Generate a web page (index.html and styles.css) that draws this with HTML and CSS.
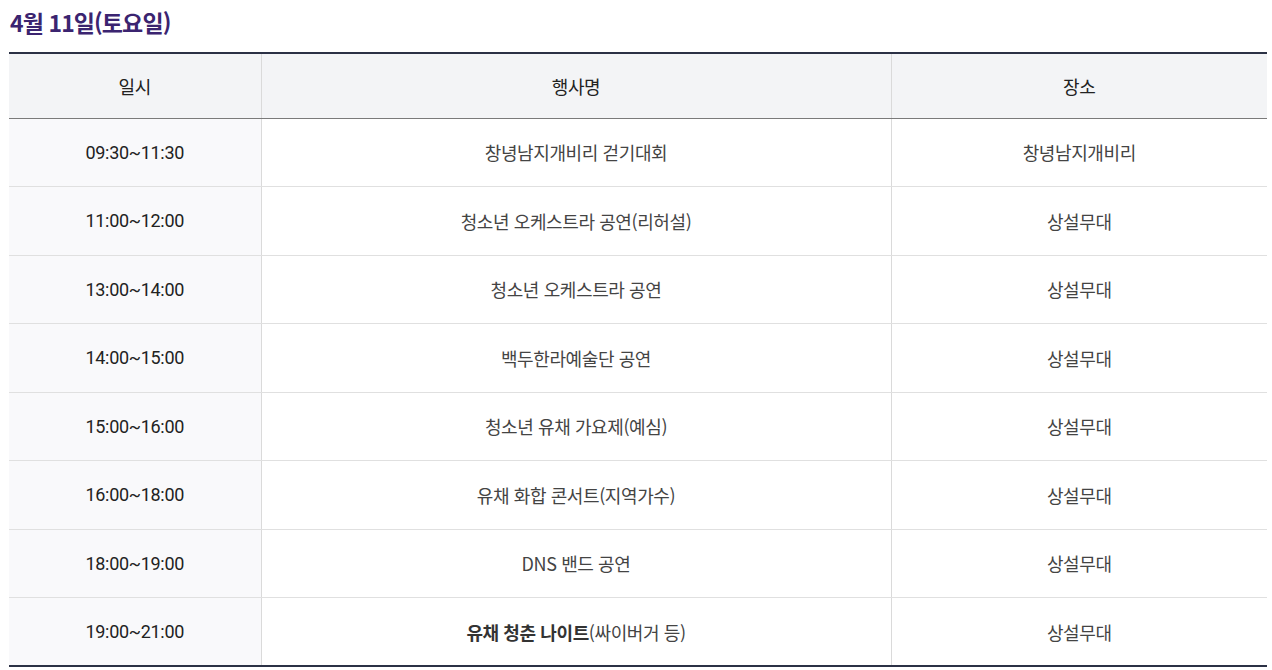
FILE: index.html
```html
<!DOCTYPE html>
<html lang="ko">
<head>
<meta charset="utf-8">
<link rel="stylesheet" href="styles.css">
</head>
<body>
<div class="wrap">
  <h2 class="title">4월 11일(토요일)</h2>
  <table class="sched">
    <colgroup>
      <col class="c1"><col class="c2"><col class="c3">
    </colgroup>
    <thead>
      <tr><th>일시</th><th>행사명</th><th>장소</th></tr>
    </thead>
    <tbody>
      <tr><td class="time">09:30~11:30</td><td>창녕남지개비리 걷기대회</td><td>창녕남지개비리</td></tr>
      <tr><td class="time">11:00~12:00</td><td>청소년 오케스트라 공연(리허설)</td><td>상설무대</td></tr>
      <tr><td class="time">13:00~14:00</td><td>청소년 오케스트라 공연</td><td>상설무대</td></tr>
      <tr><td class="time">14:00~15:00</td><td>백두한라예술단 공연</td><td>상설무대</td></tr>
      <tr><td class="time">15:00~16:00</td><td>청소년 유채 가요제(예심)</td><td>상설무대</td></tr>
      <tr><td class="time">16:00~18:00</td><td>유채 화합 콘서트(지역가수)</td><td>상설무대</td></tr>
      <tr><td class="time">18:00~19:00</td><td>DNS 밴드 공연</td><td>상설무대</td></tr>
      <tr><td class="time">19:00~21:00</td><td><strong>유채 청춘 나이트</strong>(싸이버거 등)</td><td>상설무대</td></tr>
    </tbody>
  </table>
</div>
</body>
</html>
```
FILE: styles.css
```css
* { box-sizing: border-box; }
html, body { margin: 0; padding: 0; background: #fff; }
body {
  font-family: "Noto Sans CJK KR", "Noto Sans", sans-serif;
  color: #333;
}
.wrap {
  padding: 6px 5px 0 9px;
}
.title {
  margin: 0 0 14px 1px;
  font-size: 23px;
  line-height: 32px;
  font-weight: 700;
  color: #3b2470;
  letter-spacing: -0.9px;
}
.sched {
  width: 1258px;
  border-collapse: collapse;
  border-top: 2px solid #2b3145;
  border-bottom: 2px solid #2b3145;
  table-layout: fixed;
}
.c1 { width: 252px; }
.c2 { width: 630px; }
.c3 { width: 376px; }
.sched th {
  height: 65px;
  background: #f3f4f6;
  font-weight: 400;
  font-size: 18px;
  color: #222;
  border-left: 1px solid #dadada;
  border-bottom: 1px solid #7a7a7a;
  letter-spacing: -0.4px;
}
.sched td {
  height: 68.5px;
  text-align: center;
  font-size: 18px;
  color: #444;
  border-left: 1px solid #dadada;
  border-bottom: 1px solid #e0e0e0;
  letter-spacing: -0.4px;
}
.sched th:first-child, .sched td:first-child { border-left: none; }
.sched tbody tr:last-child td { border-bottom: none; }
.sched td.time {
  background: #f9f9fb;
  color: #222;
  font-family: "Roboto", "Noto Sans CJK KR", sans-serif;
  letter-spacing: -0.3px;
}
.sched strong {
  font-weight: 700;
  color: #333;
}
```
